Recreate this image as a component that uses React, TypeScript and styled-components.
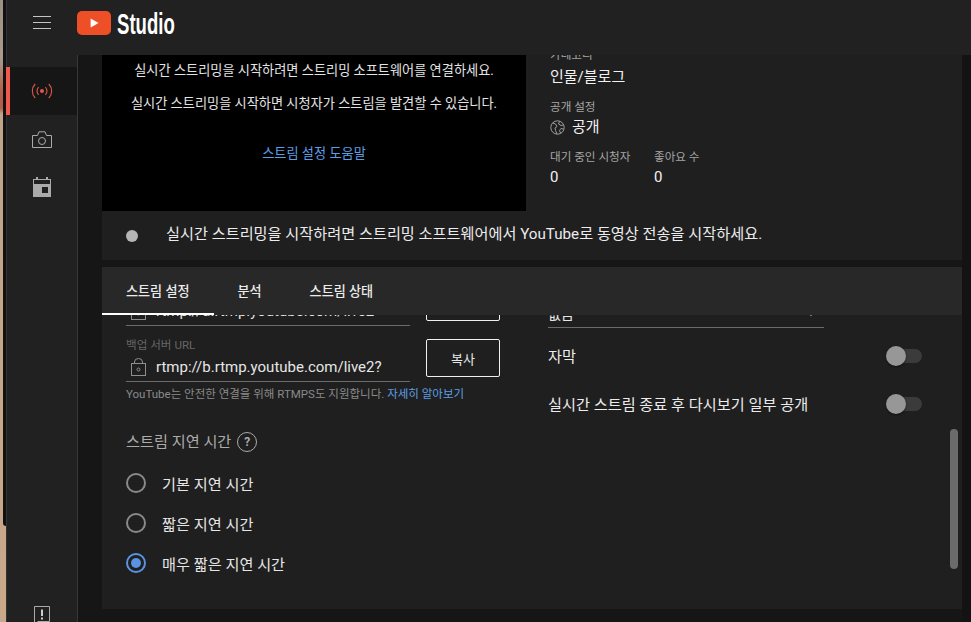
import type { FC } from "react";
import styled, { createGlobalStyle } from "styled-components";

const GlobalStyle = createGlobalStyle`
  html, body {
    margin: 0;
    height: 100%;
    overflow: hidden;
    background: #161616;
  }
  #root { height: 100%; }
  * { box-sizing: border-box; }
`;

const Page = styled.div`
  display: flex;
  width: 971px;
  height: 622px;
  overflow: hidden;
  font-family: Roboto, "Noto Sans CJK KR", sans-serif;
  color: #fff;
`;

const DesktopStrip = styled.div`
  flex: 0 0 6px;
  background: linear-gradient(
    180deg,
    #9c9084 0,
    #a89a8c 58px,
    #b4604a 90px,
    #b25a46 108px,
    #c0a488 114px,
    #c9a88a 100%
  );
`;

const WindowEdge = styled.div`
  margin-left: 3px;
  height: 526px;
  background: #111;
  border-bottom-left-radius: 3px;
`;

const AppWindow = styled.div`
  flex: 1;
  display: flex;
  flex-direction: column;
  min-width: 0;
`;

const Header = styled.header`
  flex: 0 0 55px;
  display: flex;
  align-items: center;
  padding-bottom: 9px;
  background: #212121;
  box-shadow: inset 1px 0 0 #333;
`;

const Burger = styled.div`
  display: flex;
  flex-direction: column;
  gap: 5px;
  width: 18px;
  margin: -1px 26px 0 27px;
  span {
    height: 1px;
    background: #c4c4c4;
  }
`;

const Brand = styled.div`
  display: flex;
  align-items: center;
  gap: 6px;
`;

const BrandName = styled.span`
  display: inline-block;
  margin-top: 1px;
  font-family: "Liberation Sans", sans-serif;
  font-weight: 700;
  font-size: 29px;
  line-height: 30px;
  transform-origin: left center;
  transform: scaleX(0.64);
  color: #fff;
`;

const Body = styled.div`
  flex: 1;
  display: flex;
  min-height: 0;
`;

const Sidebar = styled.nav`
  flex: 0 0 72px;
  display: flex;
  flex-direction: column;
  padding-top: 12px;
  background: #212121;
  box-shadow: inset 1px 0 0 #333;
  border-right: 1px solid #383838;
  overflow: hidden;
`;

const NavItem = styled.div<{ $active?: boolean }>`
  flex: 0 0 48px;
  display: flex;
  align-items: center;
  justify-content: center;
  padding-right: 4px;
  background: ${({ $active }) => ($active ? "#161616" : "transparent")};
  border-left: 4px solid ${({ $active }) => ($active ? "#f0594b" : "transparent")};
`;

const FeedbackSlot = styled.div`
  margin-top: auto;
  margin-bottom: -3px;
  display: flex;
  justify-content: center;
`;

const Main = styled.main`
  flex: 1;
  min-width: 0;
  display: flex;
  background: linear-gradient(90deg, #161616 884px, #131313 884px);
`;

const Content = styled.div`
  flex: 0 0 860px;
  margin-left: 24px;
  display: flex;
  flex-direction: column;
`;

const TopRow = styled.section`
  flex: 0 0 156px;
  display: flex;
  overflow: hidden;
  background: #1f1f1f;
`;

const VideoPane = styled.div`
  flex: 0 0 424px;
  display: flex;
  flex-direction: column;
  align-items: center;
  padding-top: 6px;
  background: #000;
`;

const VideoLine = styled.p<{ $gap: number }>`
  margin: ${({ $gap }) => $gap}px 0 0;
  font-size: 13.2px;
  line-height: 20px;
  color: #e4e4e4;
`;

const HelpLink = styled(VideoLine)`
  color: #5d9fe6;
`;

const InfoPane = styled.div`
  flex: 1;
  padding-left: 24px;
  display: flex;
  flex-direction: column;
`;

const InfoLabel = styled.div<{ $gap: number }>`
  margin-top: ${({ $gap }) => $gap}px;
  font-size: 11.6px;
  line-height: 16px;
  color: #a6a6a6;
`;

const InfoValue = styled.div`
  margin-top: 1px;
  font-size: 15px;
  line-height: 22px;
  color: #f2f2f2;
  display: flex;
  align-items: center;
  gap: 7px;
`;

const CategoryValue = styled(InfoValue)`
  margin-top: 3px;
`;

const Stats = styled.div`
  display: flex;
`;

const Stat = styled.div`
  flex: 0 0 104px;
`;

const StatusBar = styled.div`
  flex: 0 0 49px;
  display: flex;
  align-items: center;
  padding-left: 24px;
  background: #1f1f1f;
  font-size: 15.2px;
  color: #ececec;
`;

const StatusDot = styled.span`
  width: 12px;
  height: 12px;
  margin-right: 28px;
  border-radius: 50%;
  background: #b5b5b5;
`;

const StatusText = styled.span`
  padding-bottom: 7px;
`;

const Tabs = styled.div`
  flex: 0 0 48px;
  margin-top: 7px;
  display: flex;
  background: #282828;
`;

const Tab = styled.div<{ $active?: boolean }>`
  display: flex;
  align-items: center;
  padding: 0 24px;
  font-size: 13.1px;
  font-weight: 500;
  color: #ececec;
  border-bottom: 2px solid ${({ $active }) => ($active ? "#fff" : "transparent")};
`;

const Panel = styled.section`
  position: relative;
  flex: 0 0 294px;
  overflow: hidden;
  padding: 0 40px 0 24px;
  display: grid;
  grid-template-columns: 374px 374px;
  column-gap: 48px;
  align-content: start;
  background: #1f1f1f;
`;

const LeftColumn = styled.div`
  margin-top: -33px;
  display: flex;
  flex-direction: column;
`;

const RightColumn = styled.div`
  margin-top: -17px;
  display: flex;
  flex-direction: column;
`;

const UrlRow = styled.div`
  flex: 0 0 56px;
  display: flex;
  gap: 16px;
`;

const Field = styled.div`
  flex: 0 0 284px;
  display: flex;
  flex-direction: column;
`;

const FieldLabel = styled.div`
  font-size: 11.6px;
  line-height: 14px;
  color: #666;
`;

const FieldInput = styled.div`
  height: 30px;
  display: flex;
  align-items: center;
  gap: 10px;
  padding-left: 5px;
  font-size: 15px;
  color: #e6e6e6;
  border-bottom: 1px solid #6a6a6a;
  white-space: nowrap;
`;

const CopyButton = styled.button`
  flex: 0 0 74px;
  height: 38px;
  margin-top: 1px;
  background: transparent;
  border: 1px solid #f0f0f0;
  border-radius: 2px;
  font: inherit;
  font-size: 13px;
  color: #e8e8e8;
`;

const Hint = styled.div`
  margin-top: -7px;
  font-size: 11.5px;
  line-height: 14px;
  color: #8a8a8a;
  a {
    color: #5d9fe6;
    text-decoration: none;
  }
`;

const SectionTitle = styled.div`
  margin-top: 30px;
  display: flex;
  align-items: center;
  gap: 6px;
  font-size: 15.2px;
  line-height: 22px;
  color: #ababab;
`;

const HelpCircle = styled.span`
  width: 20px;
  height: 20px;
  border: 1px solid #aaa;
  border-radius: 50%;
  display: flex;
  align-items: center;
  justify-content: center;
  font-size: 12px;
  font-weight: 700;
  color: #aaa;
`;

const RadioGroup = styled.div`
  margin-top: 10px;
  display: flex;
  flex-direction: column;
`;

const RadioRow = styled.div`
  height: 40px;
  display: flex;
  align-items: center;
  gap: 16px;
  font-size: 15.2px;
  color: #e6e6e6;
`;

const RadioMark = styled.span<{ $checked?: boolean }>`
  width: 20px;
  height: 20px;
  border-radius: 50%;
  border: 2px solid ${({ $checked }) => ($checked ? "#5a93e0" : "#8a8a8a")};
  display: flex;
  align-items: center;
  justify-content: center;
  &::after {
    content: "";
    width: 10px;
    height: 10px;
    border-radius: 50%;
    background: ${({ $checked }) => ($checked ? "#5a93e0" : "transparent")};
  }
`;

const SelectBox = styled.div`
  flex: 0 0 30px;
  width: 276px;
  margin-bottom: 3px;
  display: flex;
  align-items: flex-start;
  justify-content: space-between;
  padding: 5px 8px 0 0;
  font-size: 14px;
  color: #e6e6e6;
  border-bottom: 1px solid #6a6a6a;
  svg {
    margin-top: 8px;
  }
`;

const ToggleRow = styled.div`
  flex: 0 0 48px;
  display: flex;
  align-items: center;
  justify-content: space-between;
  font-size: 15.2px;
  color: #ececec;
`;

const Switch = styled.span`
  position: relative;
  width: 36px;
  height: 14px;
  margin-top: 2px;
  background: #3b3b3b;
  border-radius: 7px;
  &::before {
    content: "";
    position: absolute;
    left: 0;
    top: -3px;
    width: 20px;
    height: 20px;
    border-radius: 50%;
    background: #979797;
    box-shadow: 0 1px 2px rgba(0, 0, 0, 0.5);
  }
`;

const ScrollThumb = styled.div`
  position: absolute;
  right: 4px;
  top: 114px;
  width: 8px;
  height: 140px;
  border-radius: 4px;
  background: #6b6b6b;
`;

const LogoIcon = () => (
  <svg width="34" height="24" viewBox="0 0 34 24">
    <rect width="34" height="24" rx="5" fill="#ee4f27" />
    <path d="M13.6 7.600v9l8-4.500z" fill="#fff" />
  </svg>
);

const LiveIcon = () => (
  <svg width="22" height="16" viewBox="0 0 22 16" fill="none" stroke="#e0584b" strokeWidth="1.1">
    <circle cx="11" cy="8" r="2" fill="#e0584b" stroke="none" />
    <path d="M7.6 4.200a5.400 5.400 0 0 0 0 7.600M14.400 4.200a5.400 5.400 0 0 1 0 7.600" />
    <path d="M4.200 1a10 10 0 0 0 0 14M17.800 1a10 10 0 0 1 0 14" />
  </svg>
);

const CameraIcon = () => (
  <svg width="20" height="17" viewBox="0 0 20 17" fill="none" stroke="#aaa" strokeWidth="1">
    <path d="M.5 4.500h5l1.500-3.700h6l1.500 3.700h5v12H.5z" />
    <circle cx="10" cy="10" r="3.500" />
  </svg>
);

const CalendarIcon = () => (
  <svg width="18" height="20" viewBox="0 0 18 20">
    <path d="M3 0h2v3H3zM13 0h2v3h-2z" fill="#aaa" />
    <rect x=".5" y="2.500" width="17" height="17" fill="none" stroke="#aaa" />
    <rect x="1" y="7" width="16" height="12" fill="#aaa" />
    <rect x="9" y="10" width="6" height="6" fill="#1f1f1f" />
  </svg>
);

const FeedbackIcon = () => (
  <svg width="16" height="19" viewBox="0 0 16 19" fill="none" stroke="#aaa">
    <path d="M.5.500h15v15H4l-3.500 3z" />
    <path d="M8 3.500v6.500M8 11.500v2" strokeWidth="2" stroke="#ccc" />
  </svg>
);

const GlobeIcon = () => (
  <svg width="15" height="15" viewBox="0 0 15 15" fill="none" stroke="#aaa" strokeWidth="0.9">
    <circle cx="7.500" cy="7.500" r="6.700" />
    <path d="M2.800 3l2.700 1 1.500 2.500L5 8l.5 2.500 1.500 3.500M9.500 1.500L8.500 4l2.500 1.500 2.500-.5M13.500 9l-2.500-.5-1.500 2 1 2.500" />
  </svg>
);

const LockIcon = () => (
  <svg width="15" height="18" viewBox="0 0 15 18" fill="none" stroke="#8f8f8f">
    <rect x=".5" y="5.500" width="14" height="12" />
    <path d="M3.500 5.500V4a4 3.500 0 0 1 8 0v1" />
    <circle cx="7.500" cy="11.500" r="1.500" />
  </svg>
);

const ChevronIcon = () => (
  <svg width="10" height="6" viewBox="0 0 10 6">
    <path d="M1 1l4 4 4-4z" fill="#ccc" />
  </svg>
);

const UrlField: FC<{ label: string; url: string }> = ({ label, url }) => (
  <UrlRow>
    <Field>
      <FieldLabel>{label}</FieldLabel>
      <FieldInput>
        <LockIcon />
        {url}
      </FieldInput>
    </Field>
    <CopyButton>복사</CopyButton>
  </UrlRow>
);

const App: FC = () => (
  <>
    <GlobalStyle />
    <Page>
      <DesktopStrip>
        <WindowEdge />
      </DesktopStrip>
      <AppWindow>
        <Header>
          <Burger>
            <span />
            <span />
            <span />
          </Burger>
          <Brand>
            <LogoIcon />
            <BrandName>Studio</BrandName>
          </Brand>
        </Header>
        <Body>
          <Sidebar>
            <NavItem $active>
              <LiveIcon />
            </NavItem>
            <NavItem>
              <CameraIcon />
            </NavItem>
            <NavItem>
              <CalendarIcon />
            </NavItem>
            <FeedbackSlot>
              <FeedbackIcon />
            </FeedbackSlot>
          </Sidebar>
          <Main>
            <Content>
              <TopRow>
                <VideoPane>
                  <VideoLine $gap={0}>실시간 스트리밍을 시작하려면 스트리밍 소프트웨어를 연결하세요.</VideoLine>
                  <VideoLine $gap={13}>실시간 스트리밍을 시작하면 시청자가 스트림을 발견할 수 있습니다.</VideoLine>
                  <HelpLink $gap={30}>스트림 설정 도움말</HelpLink>
                </VideoPane>
                <InfoPane>
                  <InfoLabel $gap={-8}>카테고리</InfoLabel>
                  <CategoryValue>인물/블로그</CategoryValue>
                  <InfoLabel $gap={11}>공개 설정</InfoLabel>
                  <InfoValue>
                    <GlobeIcon />
                    공개
                  </InfoValue>
                  <Stats>
                    <Stat>
                      <InfoLabel $gap={11}>대기 중인 시청자</InfoLabel>
                      <InfoValue>0</InfoValue>
                    </Stat>
                    <Stat>
                      <InfoLabel $gap={11}>좋아요 수</InfoLabel>
                      <InfoValue>0</InfoValue>
                    </Stat>
                  </Stats>
                </InfoPane>
              </TopRow>
              <StatusBar>
                <StatusDot />
                <StatusText>
                  실시간 스트리밍을 시작하려면 스트리밍 소프트웨어에서 YouTube로 동영상 전송을 시작하세요.
                </StatusText>
              </StatusBar>
              <Tabs>
                <Tab $active>스트림 설정</Tab>
                <Tab>분석</Tab>
                <Tab>스트림 상태</Tab>
              </Tabs>
              <Panel>
                <LeftColumn>
                  <UrlField label="스트림 URL" url="rtmp://a.rtmp.youtube.com/live2" />
                  <UrlField label="백업 서버 URL" url="rtmp://b.rtmp.youtube.com/live2?" />
                  <Hint>
                    YouTube는 안전한 연결을 위해 RTMPS도 지원합니다. <a>자세히 알아보기</a>
                  </Hint>
                  <SectionTitle>
                    스트림 지연 시간
                    <HelpCircle>?</HelpCircle>
                  </SectionTitle>
                  <RadioGroup>
                    <RadioRow>
                      <RadioMark />
                      기본 지연 시간
                    </RadioRow>
                    <RadioRow>
                      <RadioMark />
                      짧은 지연 시간
                    </RadioRow>
                    <RadioRow>
                      <RadioMark $checked />
                      매우 짧은 지연 시간
                    </RadioRow>
                  </RadioGroup>
                </LeftColumn>
                <RightColumn>
                  <SelectBox>
                    없음
                    <ChevronIcon />
                  </SelectBox>
                  <ToggleRow>
                    자막
                    <Switch />
                  </ToggleRow>
                  <ToggleRow>
                    실시간 스트림 종료 후 다시보기 일부 공개
                    <Switch />
                  </ToggleRow>
                </RightColumn>
                <ScrollThumb />
              </Panel>
            </Content>
          </Main>
        </Body>
      </AppWindow>
    </Page>
  </>
);

export default App;
